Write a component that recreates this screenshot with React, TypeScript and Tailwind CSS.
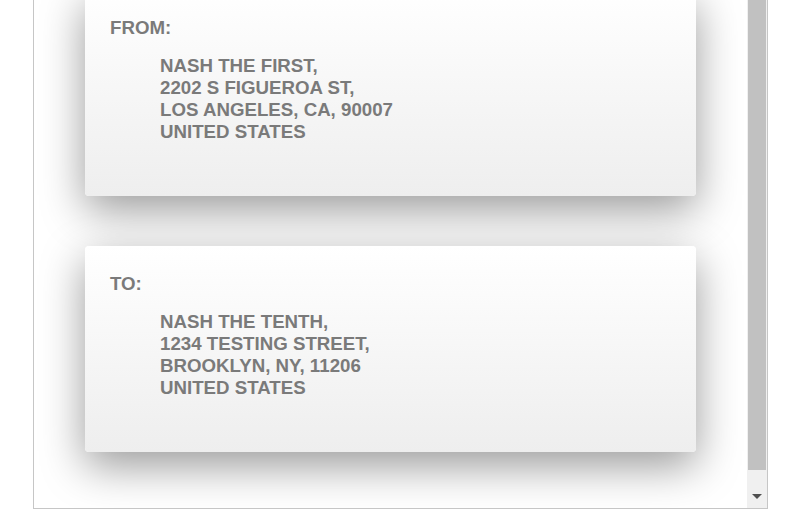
import React from "react";

interface Address {
  label: string;
  lines: string[];
}

const addresses: Address[] = [
  {
    label: "FROM:",
    lines: ["NASH THE FIRST,", "2202 S FIGUEROA ST,", "LOS ANGELES, CA, 90007", "UNITED STATES"],
  },
  {
    label: "TO:",
    lines: ["NASH THE TENTH,", "1234 TESTING STREET,", "BROOKLYN, NY, 11206", "UNITED STATES"],
  },
];

const AddressCard = ({ label, lines }: Address) => (
  <div className="w-[611px] rounded-[4px] bg-gradient-to-b from-white to-[#eeeeee] pt-[27px] pb-[53px] pl-[25px] shadow-[0_14px_44px_rgba(0,0,0,0.4)]">
    <p className="text-[18.7px] leading-[22px] font-bold text-[#7a7a7a]">{label}</p>
    <div className="mt-[16px] pl-[50px] text-[18.7px] leading-[22px] font-bold text-[#7a7a7a]">
      {lines.map((line) => (
        <p key={line}>{line}</p>
      ))}
    </div>
  </div>
);

export default function App() {
  return (
    <div className="h-[510px] w-[800px] bg-white font-['Liberation_Sans',Arial,sans-serif]">
      <div className="ml-[33px] flex h-[509px] w-[735px] overflow-hidden border-x border-b border-[#c6c6c6]">
        <div className="flex-1 overflow-hidden">
          <div className="-mt-[10px] ml-[51px] flex flex-col gap-[50px]">
            {addresses.map((a) => (
              <AddressCard key={a.label} {...a} />
            ))}
          </div>
        </div>
        <div className="flex w-[20px] flex-col bg-[#f0f0f0] px-[1px]">
          <div className="h-[470px] bg-[#c1c1c1]" />
          <div className="flex flex-1 items-end justify-center pb-[9px]">
            <div className="h-0 w-0 border-x-[5px] border-t-[5px] border-x-transparent border-t-[#505050]" />
          </div>
        </div>
      </div>
    </div>
  );
}
